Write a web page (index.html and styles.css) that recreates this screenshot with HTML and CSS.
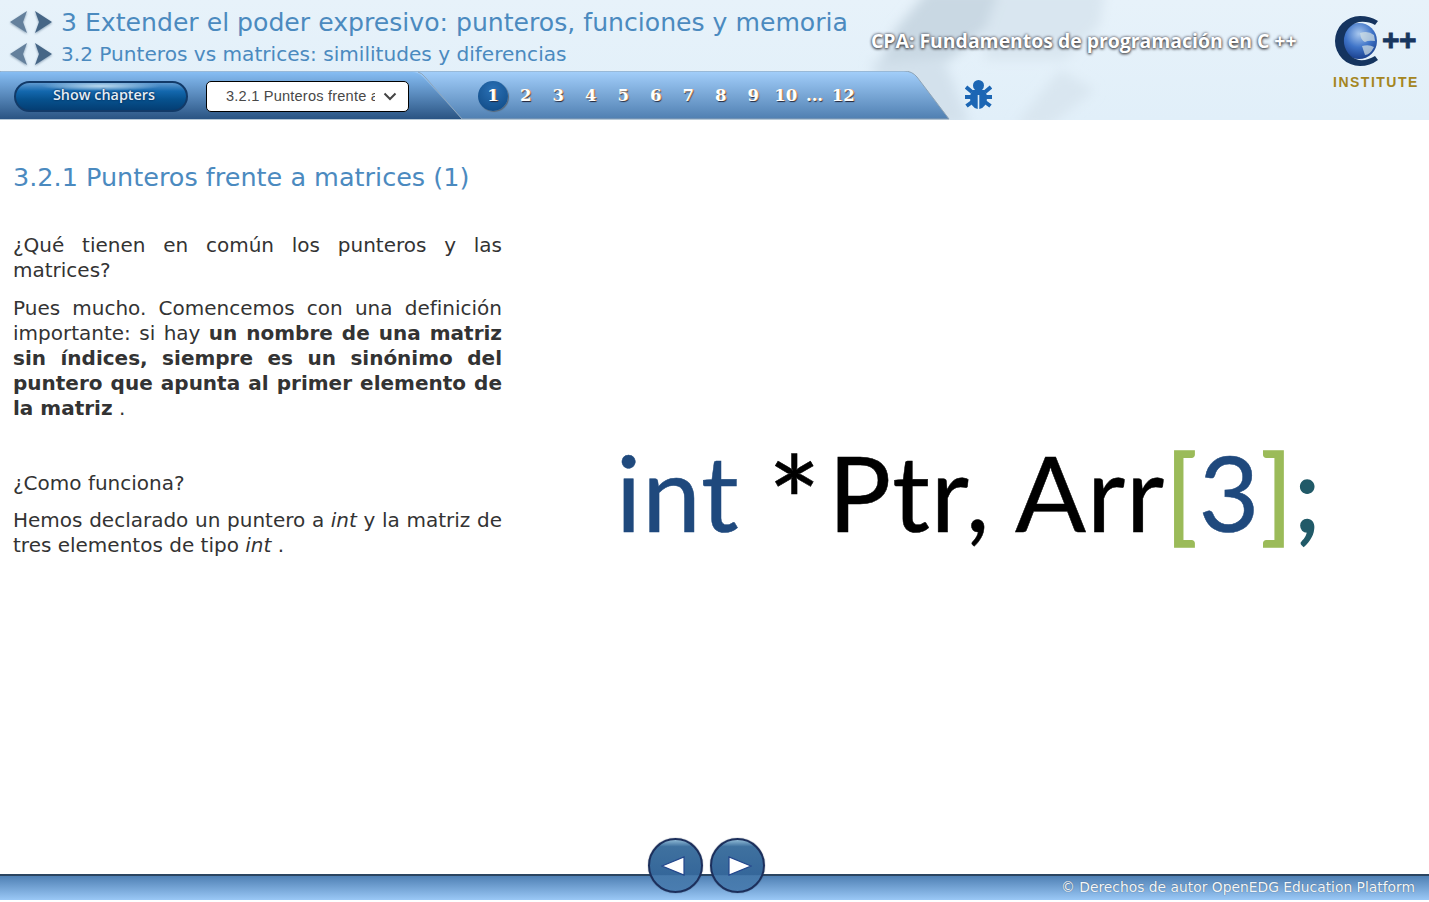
FILE: index.html
```html
<!DOCTYPE html>
<html lang="es">
<head>
<meta charset="utf-8">
<title>CPA</title>
<link rel="stylesheet" href="styles.css">
</head>
<body>
<div class="page">
<header class="header">
  <svg class="photo" viewBox="0 0 600 120" aria-hidden="true">
    <defs><filter id="soft" x="-30%" y="-30%" width="160%" height="160%"><feGaussianBlur stdDeviation="6"/></filter></defs>
    <g filter="url(#soft)">
      <path d="M78 -10 L150 -10 L135 30 L100 60 L30 62 L45 30 Z" fill="#c9d8e3"/>
      <path d="M150 -10 L255 -10 L250 25 L215 60 L135 60 L135 30 Z" fill="#d9e6f0"/>
      <path d="M20 62 L95 62 L120 125 L50 125 Z" fill="#d3e1ec"/>
      <path d="M210 70 L245 90 L195 130 L165 125 Z" fill="#d9e6f0"/>
    </g>
  </svg>
  <div class="titles">
    <div class="title-row title-main">
      <svg class="arrows" viewBox="0 0 44 24" aria-hidden="true"><path d="M18 1 L1 12 L18 23 L14 12 Z" fill="#64809c"/><path d="M26 1 L43 12 L26 23 L30 12 Z" fill="#466686"/></svg>
      <span>3 Extender el poder expresivo: punteros, funciones y memoria</span>
    </div>
    <div class="title-row title-sub">
      <svg class="arrows" viewBox="0 0 44 24" aria-hidden="true"><path d="M18 1 L1 12 L18 23 L14 12 Z" fill="#64809c"/><path d="M26 1 L43 12 L26 23 L30 12 Z" fill="#466686"/></svg>
      <span>3.2 Punteros vs matrices: similitudes y diferencias</span>
    </div>
  </div>
  <div class="course">CPA: Fundamentos de programación en C ++</div>
  <div class="logo">
    <div class="logo-mark">
      <svg class="globe" viewBox="0 0 50 52" aria-hidden="true">
        <defs><radialGradient id="earth" cx="0.5" cy="0.3" r="0.75"><stop offset="0" stop-color="#a9c8ee"/><stop offset="0.5" stop-color="#3f74c8"/><stop offset="1" stop-color="#163a86"/></radialGradient></defs>
        <circle cx="27" cy="26" r="18" fill="url(#earth)"/>
        <path d="M28 18 Q36 15 42 20 L43 26 Q36 25 33 27 Q29 26 28 18Z M30 31 Q37 29 42 32 Q38 40 33 40Z" fill="#d6e2e4" opacity="0.7"/>
        <path d="M46 6 Q38 1 28 1 A25 25 0 0 0 28 51 Q38 51 46 45 L43 41 Q35 46 27 45 A19.500 19.500 0 0 1 27 7 Q36 6 43 10 Z" fill="#15345f"/>
      </svg>
      <span class="plus">++</span>
    </div>
    <div class="institute">INSTITUTE</div>
  </div>
  <nav class="nav">
    <svg class="nav-bg" viewBox="0 0 950 49" preserveAspectRatio="none" aria-hidden="true">
      <defs>
        <linearGradient id="barA" x1="0" y1="0" x2="0" y2="1"><stop offset="0" stop-color="#a3cffb"/><stop offset="1" stop-color="#4f7fb1"/></linearGradient>
        <linearGradient id="barB" x1="0" y1="0" x2="0" y2="1"><stop offset="0" stop-color="#86bdf3"/><stop offset="1" stop-color="#2a5483"/></linearGradient>
      </defs>
      <path d="M0 0 H904 Q912 0 917 6 L949 48 H0 Z" fill="url(#barA)" stroke="#8da3b6"/>
      <path d="M0 1 H412 Q418 1 423 6 L462 48 H0 Z" fill="url(#barB)"/>
      <path d="M418 1 Q422 2 425 6 L462 48" fill="none" stroke="#8ea6bc"/>
    </svg>
    <button class="chapters" type="button">Show chapters</button>
    <select class="topic" aria-label="Tema">
      <option>3.2.1 Punteros frente a matrices (1)</option>
    </select>
    <ol class="pager">
      <li class="current">1</li><li>2</li><li>3</li><li>4</li><li>5</li><li>6</li><li>7</li><li>8</li><li>9</li><li>10</li><li class="gap">...</li><li>12</li>
    </ol>
    <svg class="bug" viewBox="0 0 27 29" fill="#1c66b4" stroke="#1c66b4" aria-hidden="true">
      <circle cx="13.500" cy="5.500" r="5.500" stroke="none"/>
      <path d="M8 10 H19 Q22 13 22 18 Q22 27 14.300 29 V15 H12.700 V29 Q5 27 5 18 Q5 13 8 10Z" stroke="none"/>
      <path d="M1 7 L7 12 M26 7 L20 12 M0 17 H7 M27 17 H20 M1.500 26 L7 22 M25.500 26 L20 22" fill="none" stroke-width="4"/>
    </svg>
  </nav>
</header>
<main class="content">
  <section class="text">
    <h1>3.2.1 Punteros frente a matrices (1)</h1>
    <p class="first">¿Qué tienen en común los punteros y las matrices?</p>
    <p>Pues mucho. Comencemos con una definición importante: si hay <b>un nombre de una matriz sin índices, siempre es un sinónimo del puntero que apunta al primer elemento de la matriz</b> .</p>
    <p class="spaced">¿Como funciona?</p>
    <p>Hemos declarado un puntero a <i>int</i> y la matriz de tres elementos de tipo <i>int</i> .</p>
  </section>
  <section class="code"><span class="kw">int</span> <span class="star">*</span>Ptr, Arr<span class="br">[</span><span class="kw">3</span><span class="br">]</span><span class="semi">;</span></section>
</main>
<footer class="footer">
  <div class="round-buttons">
    <button class="round prev" type="button" aria-label="Anterior"><svg viewBox="0 0 24 20"><path d="M1 10 L23 1 V19 Z" fill="#fff" stroke="#23468c" stroke-width="1.200"/></svg></button>
    <button class="round next" type="button" aria-label="Siguiente"><svg viewBox="0 0 24 20"><path d="M23 10 L1 1 V19 Z" fill="#fff" stroke="#23468c" stroke-width="1.200"/></svg></button>
  </div>
  <span class="copy">© Derechos de autor OpenEDG Education Platform</span>
</footer>
</div>
</body>
</html>
```
FILE: styles.css
```css
* { box-sizing: border-box; }
html, body { margin: 0; padding: 0; background: #fff; }
.page { width: 1429px; height: 900px; display: flex; flex-direction: column; overflow: hidden; font-family: "DejaVu Sans", Verdana, sans-serif; }

.header { position: relative; height: 120px; flex: none; background: linear-gradient(#e7f2fa, #e1eff9); display: flex; flex-direction: column; overflow: hidden; }
.photo { position: absolute; left: 850px; top: 0; width: 600px; height: 120px; }
.titles { position: relative; height: 71px; padding: 8px 0 0 9px; display: flex; flex-direction: column; gap: 5px; color: #4b8abf; }
.title-row { display: flex; align-items: center; gap: 8px; white-space: nowrap; }
.title-main { font-size: 25.140px; height: 28px; }
.title-sub { font-size: 20.100px; height: 26px; }
.arrows { width: 44px; height: 24px; flex: none; filter: drop-shadow(0 1px 1px #8aa0b5); }

.course { position: absolute; left: 871px; top: 30px; font: 700 19.400px/22px "Open Sans", sans-serif; color: #fff; text-shadow: 0 1px 3px #333, 0 0 3px #556; white-space: nowrap; }
.logo { position: absolute; left: 1332px; top: 15px; width: 88px; }
.logo-mark { display: flex; align-items: center; }
.globe { width: 50px; height: 52px; flex: none; }
.plus { font: 700 30px/1 "Liberation Sans", sans-serif; color: #17365f; letter-spacing: -0.500px; -webkit-text-stroke: 0.800px #17365f; padding-bottom: 3px; }
.institute { margin-top: 7px; font: 700 14px/16px "Liberation Sans", sans-serif; letter-spacing: 1.500px; color: #a5861f; white-space: nowrap; padding-left: 1px; }

.nav { position: relative; height: 49px; display: flex; align-items: flex-start; padding: 10px 0 0 14px; }
.nav-bg { position: absolute; left: 0; top: 0; width: 950px; height: 49px; }
.chapters { position: relative; width: 174px; height: 31px; padding: 0 0 3px 6px; border: 2px solid #123a68; border-radius: 16px; color: #e4eef7; font: 600 14.400px/1 "Open Sans", sans-serif; text-shadow: 0 0 2px #013; background: radial-gradient(ellipse 60px 5px at 50% 3px, #b9d8ee, transparent), linear-gradient(#5f9ad0 0, #1468ae 30%, #07528f 60%, #043e74 100%); }
.topic { position: relative; width: 203px; height: 31px; margin-left: 18px; padding: 0 33px 2px 19px; border: 1px solid #000; border-radius: 5px; background: #fff url("data:image/svg+xml,%3Csvg xmlns='http://www.w3.org/2000/svg' width='14' height='9'%3E%3Cpath d='M1.500 1.500 L7 7 L12.500 1.500' fill='none' stroke='%23444' stroke-width='2'/%3E%3C/svg%3E") no-repeat right 11px center; color: #484848; font: 14.600px "Liberation Sans", Arial, sans-serif; letter-spacing: 0.200px; appearance: none; }
.pager { position: relative; display: flex; list-style: none; margin: 0 0 0 69px; padding: 0; font: bold 16.400px/30px "DejaVu Serif", serif; color: #fff; text-shadow: 1px 0 0 #c96, 1px 1px 1px #223; }
.pager li { width: 32.500px; text-align: center; }
.pager .current { width: 30px; height: 30px; margin-right: 1.500px; border-radius: 50%; background: radial-gradient(circle at 50% 30%, #2a70b5, #15528f 75%, #0f3d6e); box-shadow: 1px 1px 1px #567; }
.pager .gap { width: 25px; }
.bug { position: absolute; left: 965px; top: 9px; width: 27px; height: 29px; }

.content { flex: 1; display: flex; }
.text { width: 502px; padding-left: 13px; flex: none; color: #333; font-size: 20px; line-height: 25px; }
.text h1 { margin: 41px 0 40px; font-weight: 400; font-size: 25.500px; line-height: 32px; color: #4b8abf; white-space: nowrap; }
.text p { margin: 0 0 13px; text-align: justify; }
.text p.spaced { margin: 50px 0 12px; }
.code { display: block; flex: 1; padding: 319px 0 0 114px; height: 754px; color: #000; font: 400 105px/1 Lato, sans-serif; letter-spacing: 1px; white-space: nowrap; -webkit-text-stroke: 0.500px currentColor; }
.kw { color: #1f497d; }
.star { font-size: 126px; line-height: 0; margin-right: 6px; vertical-align: -17px; }
.br { color: #9bbb59; -webkit-text-stroke-width: 1.500px; }
.semi { color: #215a68; -webkit-text-stroke-width: 1.500px; }

.footer { position: relative; height: 26px; flex: none; border-top: 2px solid #2b4560; background: linear-gradient(#4f80b4, #9ac8f6); display: flex; align-items: center; justify-content: flex-end; padding: 0 14px 2px 0; }
.copy { color: #f2f7fc; font-size: 13.850px; text-shadow: 0 0 1px #456; }
.round-buttons { position: absolute; left: 648px; top: -38px; display: flex; gap: 7px; }
.round { width: 55px; height: 55px; padding: 0; display: flex; align-items: center; justify-content: center; border: 2px solid #1c2f5c; border-radius: 50%; background: linear-gradient(#8db8d4 0, #3f719f 13%, #35679a 68%, #4679ab 70%, #4a7db0 100%); box-shadow: 0 0 1px #345; }
.round svg { width: 24px; height: 20px; }
.prev svg { margin-right: 6px; }
.next svg { margin-left: 5px; }
```
